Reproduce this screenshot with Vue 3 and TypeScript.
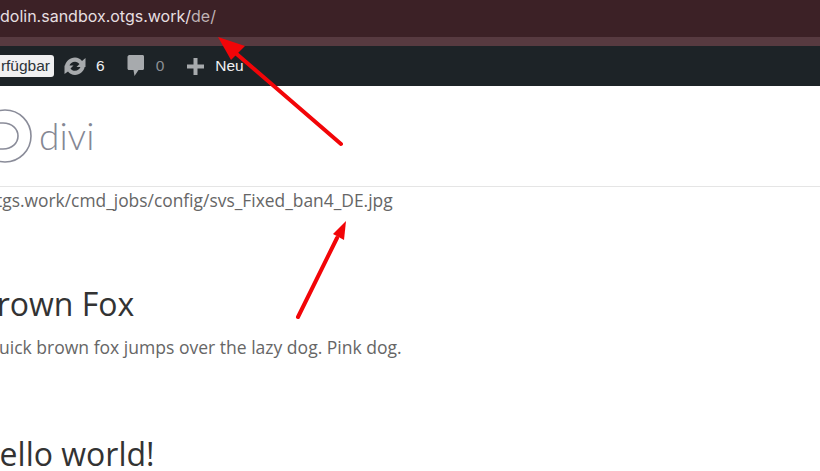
<script setup lang="ts">
const title = 'Brown Fox'
</script>

<template>
  <div class="page">
    <div class="urlbar">dolin.sandbox.otgs.work/<span class="dim">de/</span></div>
    <div class="strip"></div>
    <div class="admin">
      <span class="badge"><span>rfügbar</span></span>
      <span class="item updates">
        <svg width="24" height="20" viewBox="0 0 24 20"><path d="M12 1.500c2.900 0 5.400 1.300 7 3.400L22.500 2v9h-9l3-2.900C15.500 6.600 13.900 5.700 12 5.700c-2.800 0-5 1.800-5.700 4.300H1.900C2.700 5.200 6.900 1.500 12 1.500zM1.500 18v-8.500h9l-3 2.900c1 1.400 2.600 2.400 4.500 2.400 2.600 0 4.900-1.700 5.600-4h4.100c-.8 4.600-4.800 8.200-9.700 8.200-2.900 0-5.400-1.300-7-3.400z" fill="#a7aaad"/></svg>
        <b>6</b>
      </span>
      <span class="item comments">
        <svg width="18" height="24" viewBox="0 0 18 24"><path d="M2.500 1h13c.9 0 1.500.6 1.500 1.500v12c0 .9-.6 1.500-1.500 1.500h-4l-4 6-1-6h-4.500c-.9 0-1.500-.6-1.500-1.500v-12C1 1.600 1.600 1 2.500 1z" fill="#a7aaad"/></svg>
        <b class="zero">0</b>
      </span>
      <span class="item neu">
        <svg width="17" height="17" viewBox="0 0 17 17"><path d="M6.500 0h4v6.500H17v4h-6.500V17h-4v-6.500H0v-4h6.500z" fill="#a7aaad"/></svg>
        <b>Neu</b>
      </span>
    </div>
    <header class="head">
      <svg class="logo" width="34" height="56" viewBox="0 0 34 56" fill="none" stroke="#8a8c99" stroke-width="1.600">
        <circle cx="5" cy="28" r="26"/>
        <path d="M-8 15H3c9 0 15 6 15 13s-6 13-15 13H-8"/>
      </svg>
      <span class="brand">divi</span>
    </header>
    <main class="content">
      <p class="path">tgs.work/cmd_jobs/config/svs_Fixed_ban4_DE.jpg</p>
      <h2 class="title t1">Brown Fox</h2>
      <p class="sub">uick brown fox jumps over the lazy dog. Pink dog.</p>
      <h2 class="title t2">Hello world!</h2>
    </main>
    <svg class="arrows" width="820" height="471" viewBox="0 0 820 471" :aria-label="title">
      <path d="M341 144 L232 50" stroke="#f20508" stroke-width="4" stroke-linecap="round"/>
      <path d="M218 37 L245 46 L231 60 Z" fill="#f20508"/>
      <path d="M298 317 L337 238" stroke="#f20508" stroke-width="4" stroke-linecap="round"/>
      <path d="M346 221 L344 240 L333 234 Z" fill="#f20508"/>
    </svg>
  </div>
</template>

<style scoped>
.page {
  position: relative;
  width: 820px;
  height: 471px;
  overflow: hidden;
  background: #fff;
  font-family: "Open Sans", sans-serif;
}
.urlbar {
  height: 37px;
  background: #3c2126;
  color: #e6dfe0;
  font-family: "Inter", "Open Sans", sans-serif;
  font-size: 16px;
  line-height: 33px;
  white-space: nowrap;
}
.dim { color: #bfb2b4; }
.strip { height: 9px; background: #573a40; }
.admin {
  height: 40px;
  background: #1d2327;
  display: flex;
  align-items: center;
  color: #f0f0f1;
  font-family: "Liberation Sans", sans-serif;
  font-size: 15.500px;
}
.admin b { font-weight: 400; }
.badge {
  display: flex;
  justify-content: flex-end;
  background: #f0f0f1;
  color: #2c3338;
  height: 22px;
  line-height: 22px;
  width: 54px;
  border-radius: 0 3px 3px 0;
  padding-right: 4px;
  box-sizing: border-box;
  font-size: 15.500px;
  white-space: nowrap;
  overflow: hidden;
}
.badge span { flex: none; }
.item { display: flex; align-items: center; }
.updates { margin-left: 9px; gap: 9px; }
.comments { margin-left: 22px; gap: 11px; }
.zero { color: #8c8f94; }
.neu { margin-left: 23px; gap: 11px; }
.head {
  height: 100px;
  border-bottom: 1px solid #e5e5e5;
  display: flex;
  align-items: center;
}
.logo { flex: none; }
.brand {
  margin-left: 5px;
  color: #858794;
  font-family: "Lato", sans-serif;
  font-weight: 300;
  font-size: 37px;
  line-height: 1;
  margin-top: -2px;
}
.content { color: #666; white-space: nowrap; }
.path { margin: 0 0 0 -4px; font-size: 17.400px; line-height: 27px; }
.title {
  margin-left: -24px;
  color: #333;
  font-size: 32px;
  font-weight: 400;
  line-height: 40px;
}
.t1 { margin-top: 70px; margin-bottom: 0; }
.sub { margin: 9px 0 0 -1px; font-size: 17.550px; line-height: 28px; }
.t2 { margin-top: 73px; margin-bottom: 0; }
.arrows { position: absolute; left: 0; top: 0; pointer-events: none; }
</style>
